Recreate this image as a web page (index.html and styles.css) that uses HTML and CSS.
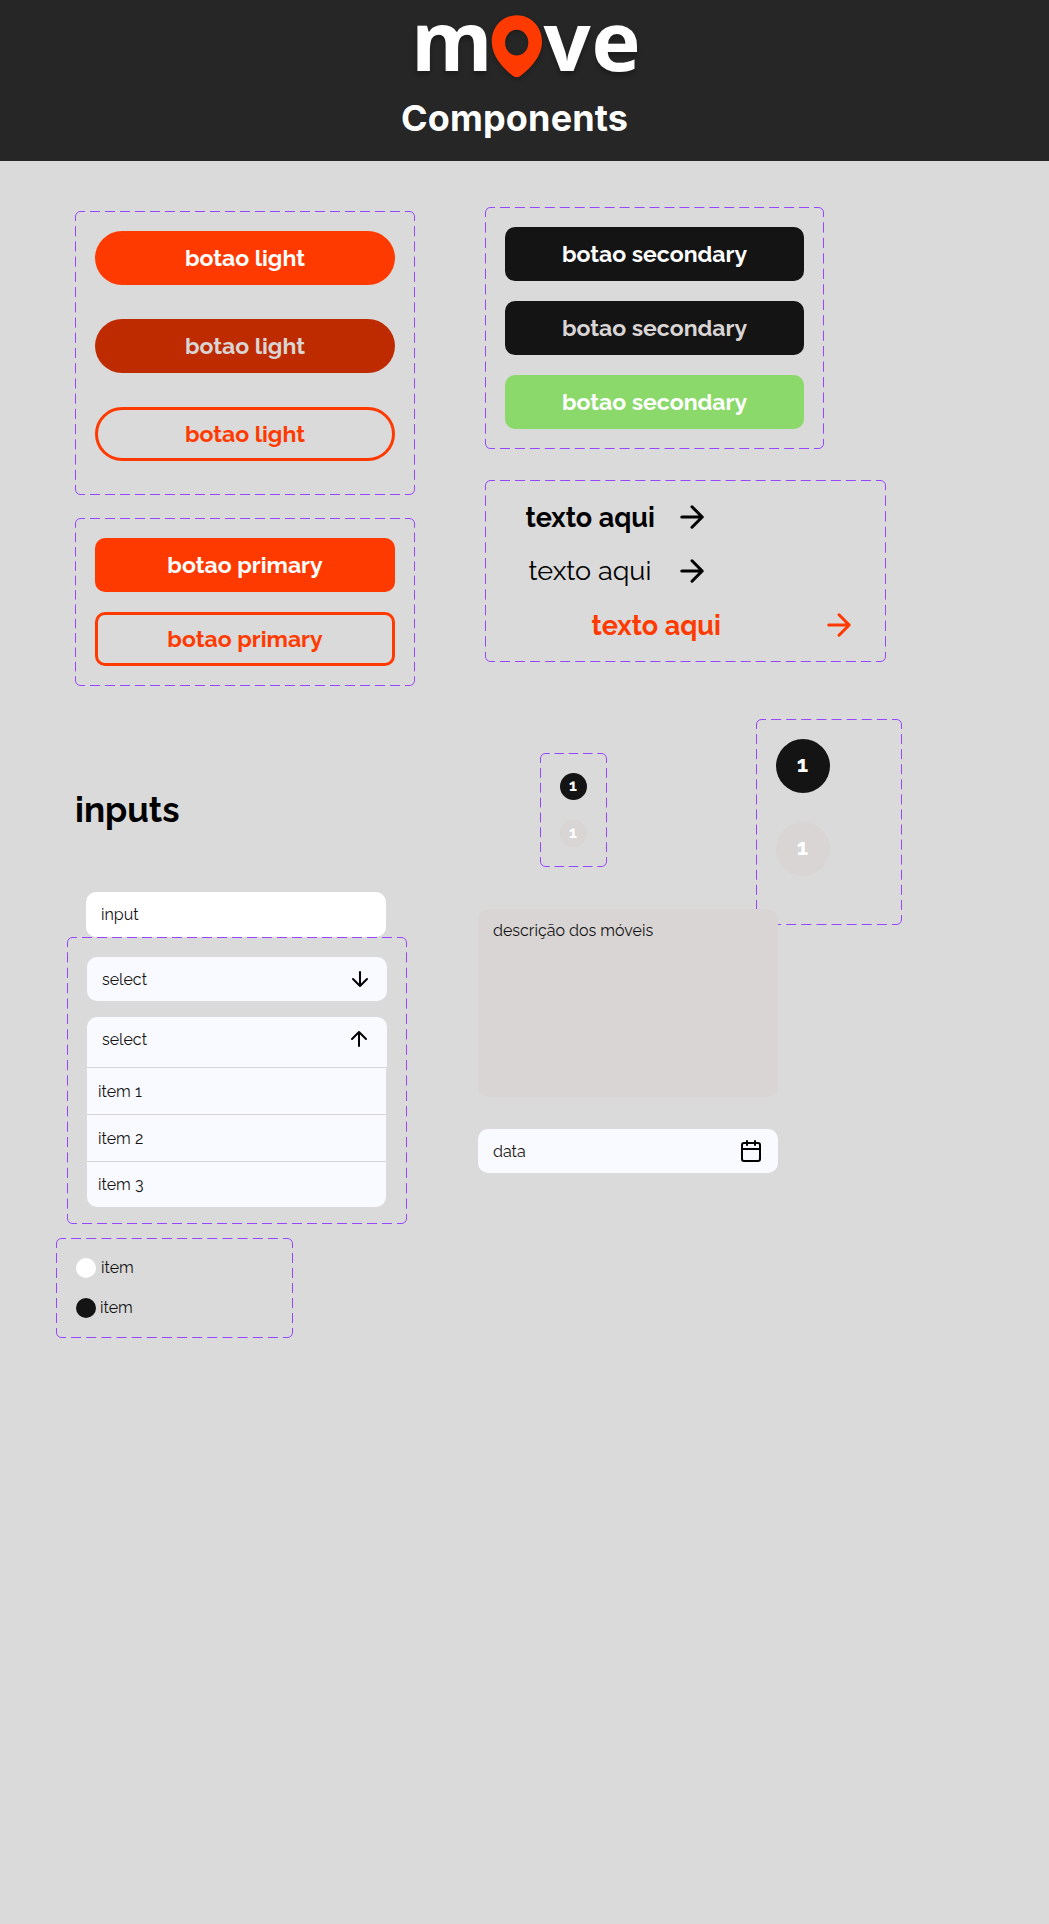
FILE: index.html
```html
<!DOCTYPE html>
<html lang="pt-BR">
<head>
<meta charset="utf-8">
<title>move – Components</title>
<link rel="stylesheet" href="styles.css">
</head>
<body>
<svg class="defs" aria-hidden="true">
  <symbol id="arrow" viewBox="0 0 24 24"><path d="M5 12h14M12 5l7 7-7 7"/></symbol>
</svg>

<header class="header">
  <svg class="logo" width="230" height="80" viewBox="0 0 230 80" role="img" aria-label="move">
    <g class="logo-text">
      <text x="1" y="62.9">m</text>
      <text x="133.4" y="62.9">v</text>
      <text x="181.5" y="62.9">e</text>
    </g>
    <path class="logo-pin" fill-rule="evenodd" d="M106.7 7.2C93 7.2 81.8 18.2 81.8 33.5C81.8 48.5 93 60 102.7 67.8Q106.7 70.8 110.7 67.8C120.5 60 132 48.5 132 33.5C132 18.2 120.5 7.2 106.7 7.2ZM106.7 21.8a11.6 12.9 0 1 1 0 25.8a11.6 12.9 0 1 1 0-25.8Z"/>
  </svg>
  <h1 class="title">Components</h1>
</header>

<main class="board">
  <div class="column column-left">
    <section class="frame frame-light">
      <svg class="dashes" viewBox="0 0 340 284"><path class="corner" d="M.5 5.5a5 5 0 0 1 5-5M334.5.5a5 5 0 0 1 5 5M339.5 278.5a5 5 0 0 1-5 5M5.5 283.5a5 5 0 0 1-5-5"/><path pathLength="660" d="M5 .5H335M5 283.5H335"/><path pathLength="540" d="M.5 5V279M339.5 5V279"/></svg>
      <button class="btn btn-light">botao light</button>
      <button class="btn btn-light is-pressed">botao light</button>
      <button class="btn btn-light is-outline">botao light</button>
    </section>

    <section class="frame frame-primary">
      <svg class="dashes" viewBox="0 0 340 168"><path class="corner" d="M.5 5.5a5 5 0 0 1 5-5M334.5.5a5 5 0 0 1 5 5M339.5 162.5a5 5 0 0 1-5 5M5.5 167.5a5 5 0 0 1-5-5"/><path pathLength="660" d="M5 .5H335M5 167.5H335"/><path pathLength="330" d="M.5 5V163M339.5 5V163"/></svg>
      <button class="btn btn-primary">botao primary</button>
      <button class="btn btn-primary is-outline">botao primary</button>
    </section>

    <h2 class="heading">inputs</h2>

    <div class="field field-input">input</div>

    <section class="frame frame-select">
      <svg class="dashes" viewBox="0 0 340 287"><path class="corner" d="M.5 5.5a5 5 0 0 1 5-5M334.5.5a5 5 0 0 1 5 5M339.5 281.5a5 5 0 0 1-5 5M5.5 286.5a5 5 0 0 1-5-5"/><path pathLength="660" d="M5 .5H335M5 286.5H335"/><path pathLength="540" d="M.5 5V282M339.5 5V282"/></svg>
      <div class="field"><span>select</span><svg class="icon icon-down"><use href="#arrow"/></svg></div>
      <div class="dropdown">
        <div class="field field-open"><span>select</span><svg class="icon icon-up"><use href="#arrow"/></svg></div>
        <ul class="options">
          <li>item 1</li>
          <li>item 2</li>
          <li>item 3</li>
        </ul>
      </div>
    </section>

    <section class="frame frame-radio">
      <svg class="dashes" viewBox="0 0 237 100"><path class="corner" d="M.5 5.5a5 5 0 0 1 5-5M231.5.5a5 5 0 0 1 5 5M236.5 94.5a5 5 0 0 1-5 5M5.5 99.5a5 5 0 0 1-5-5"/><path pathLength="450" d="M5 .5H232M5 99.5H232"/><path pathLength="180" d="M.5 5V95M236.5 5V95"/></svg>
      <div class="radio"><span class="dot"></span>item</div>
      <div class="radio is-checked"><span class="dot"></span>item</div>
    </section>
  </div>

  <div class="column column-right">
    <section class="frame frame-secondary">
      <svg class="dashes" viewBox="0 0 339 242"><path class="corner" d="M.5 5.5a5 5 0 0 1 5-5M333.5.5a5 5 0 0 1 5 5M338.5 236.5a5 5 0 0 1-5 5M5.5 241.5a5 5 0 0 1-5-5"/><path pathLength="660" d="M5 .5H334M5 241.5H334"/><path pathLength="450" d="M.5 5V237M338.5 5V237"/></svg>
      <button class="btn btn-secondary">botao secondary</button>
      <button class="btn btn-secondary is-muted">botao secondary</button>
      <button class="btn btn-secondary is-success">botao secondary</button>
    </section>

    <section class="frame frame-links">
      <svg class="dashes" viewBox="0 0 401 182"><path class="corner" d="M.5 5.5a5 5 0 0 1 5-5M395.5.5a5 5 0 0 1 5 5M400.5 176.5a5 5 0 0 1-5 5M5.5 181.5a5 5 0 0 1-5-5"/><path pathLength="780" d="M5 .5H396M5 181.5H396"/><path pathLength="330" d="M.5 5V177M400.5 5V177"/></svg>
      <div class="link"><span>texto aqui</span><svg class="icon icon-lg"><use href="#arrow"/></svg></div>
      <div class="link link-thin"><span>texto aqui</span><svg class="icon icon-lg"><use href="#arrow"/></svg></div>
      <div class="link link-accent"><span>texto aqui</span><svg class="icon icon-lg"><use href="#arrow"/></svg></div>
    </section>

    <div class="badges">
      <section class="frame frame-badge-sm">
        <svg class="dashes" viewBox="0 0 67 114"><path class="corner" d="M.5 5.5a5 5 0 0 1 5-5M61.5.5a5 5 0 0 1 5 5M66.5 108.5a5 5 0 0 1-5 5M5.5 113.5a5 5 0 0 1-5-5"/><path pathLength="120" d="M5 .5H62M5 113.5H62"/><path pathLength="210" d="M.5 5V109M66.5 5V109"/></svg>
        <span class="badge">1</span>
        <span class="badge is-off">1</span>
      </section>
      <section class="frame frame-badge-lg">
        <svg class="dashes" viewBox="0 0 146 206"><path class="corner" d="M.5 5.5a5 5 0 0 1 5-5M140.5.5a5 5 0 0 1 5 5M145.5 200.5a5 5 0 0 1-5 5M5.5 205.5a5 5 0 0 1-5-5"/><path pathLength="270" d="M5 .5H141M5 205.5H141"/><path pathLength="390" d="M.5 5V201M145.5 5V201"/></svg>
        <span class="badge badge-lg">1</span>
        <span class="badge badge-lg is-off">1</span>
      </section>
    </div>

    <div class="textarea">descrição dos móveis</div>

    <div class="field field-date"><span>data</span>
      <svg class="icon" viewBox="0 0 24 24"><rect x="3" y="4" width="18" height="18" rx="2"/><path d="M16 2v4M8 2v4M3 10h18"/></svg>
    </div>
  </div>
</main>
</body>
</html>
```
FILE: styles.css
```css
* { box-sizing: border-box; }

body {
  margin: 0;
  min-height: 1924px;
  background: #dadada;
  color: #000;
  font-family: Raleway, Lato, sans-serif;
}

.defs { display: none; }

/* Header */
.header {
  display: flex;
  flex-direction: column;
  height: 161px;
  padding: 8px 0 0 401px;
  background: #262626;
}

.logo { display: block; margin-left: 9px; overflow: visible; }

.logo-text {
  fill: #fff;
  font: 700 83px "Open Sans", "Noto Sans", sans-serif;
  filter: drop-shadow(0 4px 2px rgba(0, 0, 0, .25));
}

.logo-pin {
  fill: #ff3a00;
  filter: drop-shadow(0 2px 2px rgba(0, 0, 0, .25));
}

.title {
  margin: 8px 0 0;
  color: #fff;
  font: 700 36px/44px Inter, sans-serif;
  letter-spacing: .15px;
}

/* Board */
.board { display: flex; align-items: flex-start; }

.column { display: flex; flex-direction: column; align-items: flex-start; }

.column-left { width: 478px; padding: 50px 0 0 56px; }

.column-right { padding-top: 46px; }

.frame {
  position: relative;
  display: flex;
  flex-direction: column;
  align-items: flex-start;
  padding: 20px;
}

.dashes {
  position: absolute;
  inset: 0;
  width: 100%;
  height: 100%;
  fill: none;
  stroke: #9747ff;
  stroke-width: 1;
  stroke-dasharray: 10 5;
  stroke-dashoffset: 5;
}

.dashes .corner { stroke-dasharray: none; }

.frame-light { gap: 34px; width: 340px; height: 284px; margin-left: 19px; }
.frame-primary { gap: 20px; width: 340px; height: 168px; margin: 23px 0 0 19px; }
.frame-secondary { gap: 20px; width: 339px; height: 242px; margin-left: 7px; }
.frame-links { gap: 20px; width: 401px; height: 182px; margin: 31px 0 0 7px; }
.frame-select { gap: 16px; width: 340px; height: 287px; margin-left: 11px; padding-bottom: 17px; }
.frame-radio { gap: 20px; width: 237px; height: 100px; margin-top: 14px; }
.frame-badge-sm { gap: 20px; width: 67px; height: 114px; margin-top: 34px; }
.frame-badge-lg { gap: 29px; width: 146px; height: 206px; }

/* Buttons */
.btn {
  width: 100%;
  height: 54px;
  padding: 0;
  border: 0;
  border-radius: 10px;
  color: #fff;
  font: 700 23px/28px Raleway, Lato, sans-serif;
}

.btn-light,
.btn-primary { background: #ff3a00; }

.btn-light { border-radius: 27px; }

.is-pressed { background: #bf2b00; color: #d9d5d4; }

.is-outline {
  border: 3px solid #ff3a00;
  background: transparent;
  color: #ff3a00;
}

.btn-secondary { background: #141414; }
.btn-secondary.is-muted { color: #d9d5d4; }
.btn-secondary.is-success { background: #8cd96b; }

/* Icons */
.icon {
  flex: none;
  width: 24px;
  height: 24px;
  fill: none;
  stroke: currentColor;
  stroke-width: 2;
  stroke-linecap: round;
  stroke-linejoin: round;
}

.icon-lg { width: 35px; height: 35px; stroke-width: 2.1; transform: translate(-.5px, -.5px); }
.icon-down { transform: rotate(90deg); }
.icon-up { margin-right: 1px; transform: rotate(-90deg); }

/* Text links */
.link {
  display: flex;
  align-items: center;
  gap: 20px;
  height: 34px;
  padding-left: 20px;
  font-size: 27px;
  font-weight: 700;
  line-height: 32px;
}

.link span { width: 130px; padding-left: .5px; white-space: nowrap; }

.link:not(.link-thin) span { margin-top: 1px; }

.link-thin { font-weight: 400; }
.link-thin span { padding-left: 3.5px; }

.link-accent { gap: 101px; padding-left: 86px; color: #ff3a00; }

/* Headings */
.heading {
  margin: 102px 0 0 19px;
  font-size: 35px;
  line-height: 44px;
}

/* Fields */
.field {
  display: flex;
  flex: none;
  align-items: center;
  justify-content: space-between;
  width: 300px;
  height: 44px;
  padding: 0 15px;
  border-radius: 10px;
  background: #f9faff;
  color: #141414;
  font-size: 16px;
  line-height: 20px;
}

.field span { padding-top: 2px; }

.field .icon { color: #000; }

.field-input {
  height: 45px;
  margin: 60px 0 0 30px;
  background: #fff;
}

.dropdown { display: flex; flex-direction: column; align-items: flex-start; }

.field-open {
  height: 50px;
  padding-bottom: 6px;
  border-radius: 10px 10px 0 0;
}

.options {
  width: 299px;
  margin: 0;
  padding: 0;
  overflow: hidden;
  border-radius: 0 0 10px 10px;
  background: #f9faff;
  color: #141414;
  font-size: 16px;
  list-style: none;
}

.options li {
  height: 47px;
  padding-left: 11px;
  border-top: 1px solid #d9d5d4;
  line-height: 47px;
}

.options li:last-child { height: 46px; line-height: 45px; }

/* Radios */
.radio {
  display: flex;
  align-items: center;
  gap: 5px;
  height: 20px;
  color: #141414;
  font-size: 16px;
  line-height: 20px;
}

.dot { width: 20px; height: 20px; border-radius: 50%; background: #fff; }

.is-checked { gap: 4px; }
.is-checked .dot { background: #141414; }

/* Badges */
.badges {
  display: flex;
  align-items: flex-start;
  gap: 149px;
  margin: 57px 0 0 62px;
}

.badge {
  flex: none;
  width: 27px;
  height: 27px;
  padding-right: 1px;
  border-radius: 50%;
  background: #141414;
  color: #fff;
  font-size: 16px;
  font-weight: 700;
  line-height: 25px;
  text-align: center;
}

.badge-lg { width: 54px; height: 54px; font-size: 23px; line-height: 50px; }

.badge.is-off { background: #d9d5d4; }

/* Description and date */
.textarea {
  position: relative;
  width: 300px;
  height: 188px;
  margin-top: -16px;
  padding: 12px 15px;
  border-radius: 10px;
  background: #d9d5d4;
  color: #141414;
  font-size: 16px;
  line-height: 20px;
}

.field-date { margin-top: 32px; }
```
